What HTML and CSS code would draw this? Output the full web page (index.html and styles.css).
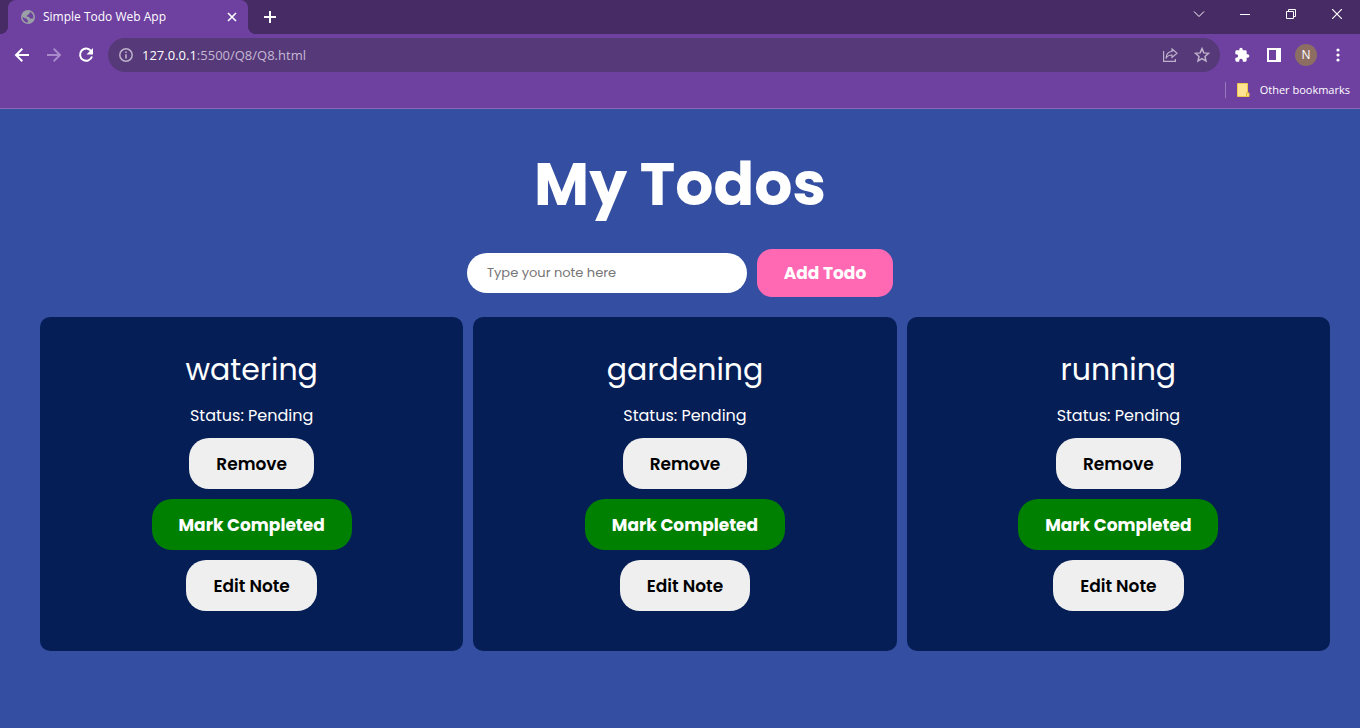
FILE: index.html
```html
<!DOCTYPE html>
<html lang="en">
<head>
<meta charset="utf-8">
<meta name="viewport" content="width=device-width, initial-scale=1">
<title>Simple Todo Web App</title>
<link rel="stylesheet" href="styles.css">
</head>
<body>
<header class="browser">
  <div class="tab-strip">
    <div class="tab">
      <svg class="tab-icon" width="14" height="14" viewBox="0 0 14 14" aria-hidden="true"><circle cx="7" cy="7" r="7" fill="#9aa0a6"/><path d="M7.8 1.5C9.500 2 9.200 3.600 8 4c-1 .3-1 1.300-1.900 1.500-.9.2-.5 1.200.5 1.200 1.300 0 1.900.4 2 1.400.1.800 1 .6 1.800.4.900-.3 1.400.2 1.900-.2A5.600 5.600 0 0 0 7.800 1.500ZM1.400 6.700C1.600 10 4 12.500 7 12.600c-.4-1.100-.1-1.500.4-2.100-1.500-.1-1.600-.9-1.500-1.700C4.500 8.600 3.400 8 1.400 6.700Z" fill="#6e41a0"/></svg>
      <span class="tab-title">Simple Todo Web App</span>
      <button class="icon-button tab-close" aria-label="Close tab"><svg width="10" height="10" viewBox="0 0 10 10"><path d="M1 1l8 8M9 1L1 9" stroke="#fff" stroke-width="1.600"/></svg></button>
    </div>
    <button class="icon-button new-tab" aria-label="New tab"><svg width="12" height="12" viewBox="0 0 12 12"><path d="M6 0v12M0 6h12" stroke="#fff" stroke-width="2"/></svg></button>
    <div class="window-controls">
      <button class="icon-button" aria-label="Search tabs"><svg width="12" height="8" viewBox="0 0 12 8"><path d="M1 1.500l5 5 5-5" fill="none" stroke="#fff"/></svg></button>
      <button class="icon-button" aria-label="Minimize"><svg width="10" height="10" viewBox="0 0 10 10"><path d="M0 5.500h10" stroke="#fff"/></svg></button>
      <button class="icon-button" aria-label="Restore"><svg width="10" height="10" viewBox="0 0 10 10" fill="none" stroke="#fff"><path d="M.5 2.500h7v7h-7zM2.500 2.500v-2h7v7h-2"/></svg></button>
      <button class="icon-button" aria-label="Close"><svg width="10" height="10" viewBox="0 0 10 10"><path d="M0 0l10 10M10 0L0 10" stroke="#fff" stroke-width="1.200"/></svg></button>
    </div>
  </div>
  <div class="toolbar">
    <div class="nav-buttons">
      <button class="icon-button" aria-label="Back"><svg width="16" height="16" viewBox="0 0 16 16"><path d="M15 8H2.500M8.300 1.700L2 8l6.300 6.300" fill="none" stroke="#fff" stroke-width="2"/></svg></button>
      <button class="icon-button" aria-label="Forward"><svg width="16" height="16" viewBox="0 0 16 16"><path d="M1 8h12.500M7.700 1.700L14 8l-6.300 6.300" fill="none" stroke="#a889c9" stroke-width="2"/></svg></button>
      <button class="icon-button" aria-label="Reload"><svg width="16" height="16" viewBox="0 0 16 16"><path d="M13.200 4.200A6.100 6.100 0 1 0 14 9.500" fill="none" stroke="#fff" stroke-width="2"/><path d="M15 1v6.500H8.500z" fill="#fff"/></svg></button>
    </div>
    <div class="omnibox">
      <svg width="14" height="14" viewBox="0 0 14 14" aria-hidden="true"><circle cx="7" cy="7" r="6.200" fill="none" stroke="#beb1cb" stroke-width="1.500"/><path d="M7 6.200v4.200M7 3.500v1.600" stroke="#beb1cb" stroke-width="1.600"/></svg>
      <div class="address" role="textbox" contenteditable="true" spellcheck="false" aria-label="Address"><span class="address-host">127.0.0.1</span>:5500/Q8/Q8.html</div>
      <button class="icon-button" aria-label="Share"><svg width="16" height="16" viewBox="0 0 16 16" fill="none" stroke="#beb1cb" stroke-width="1.200"><path d="M1.600 4v10.400h11.800V12"/><path d="M10 2l5 4.200-5 4.200V8C7 7.900 5.200 9 4 11.400 4.200 7.200 6.500 4.700 10 4.500z"/></svg></button>
      <button class="icon-button" aria-label="Bookmark this page"><svg width="16" height="16" viewBox="0 0 16 16"><path d="M8 1.600l1.800 4.300 4.700.4L11 9.400l1 4.600-4-2.400L4 14l1-4.600L1.500 6.300l4.700-.4z" fill="none" stroke="#beb1cb" stroke-width="1.500"/></svg></button>
    </div>
    <div class="toolbar-actions">
      <button class="icon-button" aria-label="Extensions"><svg width="16" height="16" viewBox="0 0 24 24"><path d="M20.500 11H19V7a2 2 0 0 0-2-2h-4V3.500a2.500 2.500 0 0 0-5 0V5H4a2 2 0 0 0-2 2v3.800h1.500a2.700 2.700 0 0 1 0 5.400H2V20a2 2 0 0 0 2 2h3.800v-1.500a2.700 2.700 0 0 1 5.400 0V22H17a2 2 0 0 0 2-2v-4h1.500a2.500 2.500 0 0 0 0-5z" fill="#fff"/></svg></button>
      <button class="icon-button" aria-label="Side panel"><svg width="14" height="14" viewBox="0 0 14 14"><path fill-rule="evenodd" d="M0 0h14v14H0zM2 2v10h7V2z" fill="#fff"/></svg></button>
      <button class="avatar" aria-label="Profile N">N</button>
      <button class="icon-button" aria-label="Menu"><svg width="4" height="14" viewBox="0 0 4 14" fill="#fff"><circle cx="2" cy="2" r="1.600"/><circle cx="2" cy="7" r="1.600"/><circle cx="2" cy="12" r="1.600"/></svg></button>
    </div>
  </div>
  <div class="bookmarks">
    <button class="bookmark-folder"><svg width="13" height="14" viewBox="0 0 13 14" aria-hidden="true"><path d="M.5.500h10V10h1.500v3.500H.5z" fill="#ffe392" stroke="#f0c84c"/><path d="M9.500 13.500V10H12" fill="none" stroke="#e8b92f"/></svg>Other bookmarks</button>
  </div>
</header>
<main class="todo-app">
  <h1 class="title">My Todos</h1>
  <form class="todo-form">
    <input class="note-input" type="text" placeholder="Type your note here" aria-label="Note">
    <button class="add-button" type="button">Add Todo</button>
  </form>
  <section class="cards" aria-label="Todos">
    <article class="card">
      <h2 class="card-title">watering</h2>
      <p class="status">Status: Pending</p>
      <button class="card-button">Remove</button>
      <button class="card-button complete">Mark Completed</button>
      <button class="card-button">Edit Note</button>
    </article>
    <article class="card">
      <h2 class="card-title">gardening</h2>
      <p class="status">Status: Pending</p>
      <button class="card-button">Remove</button>
      <button class="card-button complete">Mark Completed</button>
      <button class="card-button">Edit Note</button>
    </article>
    <article class="card">
      <h2 class="card-title">running</h2>
      <p class="status">Status: Pending</p>
      <button class="card-button">Remove</button>
      <button class="card-button complete">Mark Completed</button>
      <button class="card-button">Edit Note</button>
    </article>
  </section>
</main>
</body>
</html>
```
FILE: styles.css
```css
* {
  box-sizing: border-box;
}

body {
  display: flex;
  flex-direction: column;
  min-height: 100vh;
  margin: 0;
  background: #344fa1;
  color: #fff;
  font-family: Poppins, Inter, sans-serif;
}

button {
  border: 0;
  font-family: inherit;
  cursor: pointer;
}

svg {
  display: block;
  flex: none;
}

.browser {
  background: #6e41a0;
  border-bottom: 1px solid #8d68b4;
  font-family: "Segoe UI", "Open Sans", sans-serif;
}

.icon-button {
  display: flex;
  align-items: center;
  justify-content: center;
  flex: none;
  width: 16px;
  height: 16px;
  padding: 0;
  background: none;
}

.tab-strip {
  display: flex;
  height: 34px;
  padding-left: 8px;
  background: #472b64;
}

.tab {
  position: relative;
  display: flex;
  align-items: center;
  gap: 8px;
  width: 240px;
  padding: 0 8px 0 13px;
  background: #6e41a0;
  border-radius: 8px 8px 0 0;
}

.tab::before,
.tab::after {
  content: "";
  position: absolute;
  bottom: 0;
  width: 8px;
  height: 8px;
}

.tab::before {
  right: 100%;
  background: radial-gradient(circle at 0 0, #472b64 8px, #6e41a0 8px);
}

.tab::after {
  left: 100%;
  background: radial-gradient(circle at 100% 0, #472b64 8px, #6e41a0 8px);
}

.tab-title {
  flex: 1;
  font-size: 12px;
  line-height: 16px;
  white-space: nowrap;
}

.new-tab {
  width: 44px;
  height: 34px;
}

.window-controls {
  display: flex;
  margin-left: auto;
}

.window-controls .icon-button {
  width: 46px;
  height: 28px;
}

.toolbar {
  display: flex;
  align-items: center;
  padding: 4px 14px;
}

.nav-buttons {
  display: flex;
  gap: 16px;
  padding-right: 14px;
}

.omnibox {
  display: flex;
  flex: 1;
  align-items: center;
  gap: 16px;
  height: 34px;
  padding: 0 10px 0 11px;
  background: #563979;
  border-radius: 17px;
}

.address {
  flex: 1;
  margin-left: -7px;
  color: #c5b8d2;
  font-size: 13px;
  line-height: 20px;
  outline: none;
}

.address-host {
  color: #fff;
}

.toolbar-actions {
  display: flex;
  align-items: center;
  gap: 16px;
  padding-left: 14px;
}

.avatar {
  width: 22px;
  height: 22px;
  margin: 0 -3px;
  padding: 0;
  background: #8d6e63;
  border-radius: 50%;
  color: #fff;
  font-size: 12px;
  line-height: 22px;
}

.bookmarks {
  display: flex;
  justify-content: flex-end;
  padding: 6px 10px 10px 0;
}

.bookmark-folder {
  display: flex;
  align-items: center;
  gap: 10px;
  height: 16px;
  padding: 0 0 0 11px;
  background: none;
  border-left: 1px solid #9a78bd;
  color: #fff;
  font-size: 11px;
  line-height: 16px;
}

.todo-app {
  flex: 1;
  padding: 30px 30px 30px 40px;
}

.title {
  margin: 0 0 20px;
  padding-right: 10px;
  font-size: 60px;
  font-weight: 700;
  line-height: 90px;
  text-align: center;
}

.todo-form {
  display: flex;
  align-items: center;
  justify-content: center;
  gap: 10px;
  margin-bottom: 20px;
  padding-right: 10px;
}

.note-input {
  width: 280px;
  height: 40px;
  padding: 0 20px;
  background: #fff;
  border: 0;
  border-radius: 20px;
  color: #222;
  font-family: inherit;
  font-size: 13px;
}

.note-input::placeholder {
  color: #757575;
  opacity: 1;
}

.add-button {
  min-width: 136px;
  height: 48px;
  padding: 0 24px;
  background: #ff69b4;
  border-radius: 15px;
  color: #fff;
  font-size: 17px;
  font-weight: 700;
}

.cards {
  display: grid;
  grid-template-columns: repeat(3, 1fr);
  gap: 10px;
}

.card {
  display: flex;
  flex-direction: column;
  align-items: center;
  gap: 10px;
  padding: 30px 20px 40px;
  background: #051e55;
  border-radius: 10px;
}

.card-title {
  margin: 0;
  font-size: 30px;
  font-weight: 400;
  line-height: 46px;
}

.status {
  margin: 0;
  font-size: 16px;
  line-height: 25px;
}

.card-button {
  height: 51px;
  padding: 0 27px;
  background: #efefef;
  border-radius: 20px;
  color: #000;
  font-size: 17px;
  font-weight: 600;
}

.complete {
  background: #008000;
  color: #fff;
  font-weight: 700;
}
```
